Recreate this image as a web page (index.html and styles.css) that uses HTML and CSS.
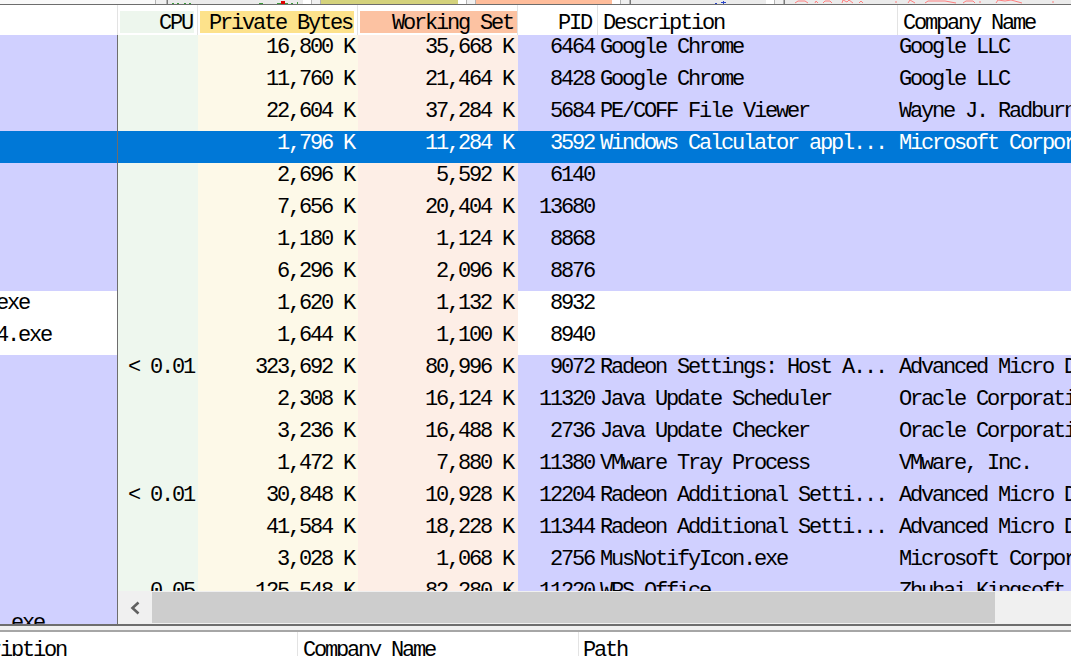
FILE: index.html
```html
<!DOCTYPE html>
<html>
<head>
<meta charset="utf-8">
<title>Process Explorer</title>
<link rel="stylesheet" href="styles.css">
</head>
<body>
<div class="app">
  <div class="graphs">
    <div class="g-blank"></div>
    <div class="g-btn g-btn-wide"></div>
    <div class="g-graph g-w136">
      <svg width="136" height="4" viewBox="0 0 136 4">
        <rect x="4" y="3" width="2" height="1" fill="#3d9a3d"/>
        <rect x="9" y="3" width="2" height="1" fill="#3d9a3d"/>
        <rect x="16" y="3" width="2" height="1" fill="#3d9a3d"/>
        <rect x="21" y="3" width="2" height="1" fill="#3d9a3d"/>
        <rect x="91" y="3" width="4" height="1" fill="#3d9a3d"/>
        <rect x="109" y="3" width="11" height="1" fill="#3d9a3d"/>
        <rect x="113" y="1" width="4" height="3" fill="#e00000"/>
        <rect x="123" y="3" width="2" height="1" fill="#3d9a3d"/>
        <rect x="129" y="2" width="1" height="2" fill="#3d9a3d"/>
      </svg>
    </div>
    <div class="g-gap"></div>
    <div class="g-btn"></div>
    <div class="g-fill g-olive"></div>
    <div class="g-gap"></div>
    <div class="g-btn"></div>
    <div class="g-fill g-salmon"></div>
    <div class="g-gap"></div>
    <div class="g-btn"></div>
    <div class="g-graph g-w136">
      <svg width="136" height="4" viewBox="0 0 136 4">
        <rect x="84" y="3" width="2" height="1" fill="#2a46c8"/>
        <rect x="92" y="1" width="1" height="3" fill="#2a46c8"/>
        <rect x="90" y="2" width="5" height="1" fill="#2a46c8"/>
      </svg>
    </div>
    <div class="g-gap"></div>
    <div class="g-btn"></div>
    <div class="g-graph g-rest">
      <svg width="288" height="4" viewBox="0 0 288 4">
        <path d="M10 3 L13 1 L20 1 L23 3 M30 3 L31 1 L33 3 M38 3 L40 1 L45 1 L47 3 M57 3 L58 0 L62 2 L64 0 L68 3 M74 3 L76 1 L78 3 M111 3 L111 1 M123 3 L125 0 L130 3 M140 3 L143 1 L160 1 L171 3 M178 3 L181 1 L188 1 L190 3 M195 3 L195 1 M211 3 L213 0 L220 1 L226 0 L237 3 M268 3 L268 1" stroke="#ff8080" stroke-width="1" fill="none"/>
      </svg>
    </div>
  </div>

  <div class="main">
    <div class="tree">
      <div class="tree-head"></div>
      <div class="tree-body">
        <div class="trow lav"></div>
        <div class="trow lav"></div>
        <div class="trow lav"></div>
        <div class="trow sel"></div>
        <div class="trow lav"></div>
        <div class="trow lav"></div>
        <div class="trow lav"></div>
        <div class="trow lav"></div>
        <div class="trow wht"><span class="tname">exe</span></div>
        <div class="trow wht"><span class="tname">4.exe</span></div>
        <div class="trow lav"></div>
        <div class="trow lav"></div>
        <div class="trow lav"></div>
        <div class="trow lav"></div>
        <div class="trow lav"></div>
        <div class="trow lav"></div>
        <div class="trow lav"></div>
        <div class="trow lav"></div>
        <div class="trow lav"><span class="tname tname-last">.exe</span></div>
      </div>
    </div>

    <div class="list">
      <div class="list-head">
        <div class="hc c-cpu"><span class="hbox hbox-cpu">CPU</span></div>
        <div class="hc c-pb"><span class="hbox hbox-pb">Private Bytes</span></div>
        <div class="hc c-ws"><span class="hbox hbox-ws">Working Set</span></div>
        <div class="hc c-pid"><span class="hlabel hlabel-right">PID</span></div>
        <div class="hc c-desc"><span class="hlabel">Description</span></div>
        <div class="hc c-co"><span class="hlabel">Company Name</span></div>
      </div>
      <div class="list-body">
        <div class="row lav"><div class="c c-cpu"></div><div class="c c-pb">16,800 K</div><div class="c c-ws">35,668 K</div><div class="c c-pid">6464</div><div class="c c-desc">Google Chrome</div><div class="c c-co">Google LLC</div></div>
        <div class="row lav"><div class="c c-cpu"></div><div class="c c-pb">11,760 K</div><div class="c c-ws">21,464 K</div><div class="c c-pid">8428</div><div class="c c-desc">Google Chrome</div><div class="c c-co">Google LLC</div></div>
        <div class="row lav"><div class="c c-cpu"></div><div class="c c-pb">22,604 K</div><div class="c c-ws">37,284 K</div><div class="c c-pid">5684</div><div class="c c-desc">PE/COFF File Viewer</div><div class="c c-co">Wayne J. Radburn</div></div>
        <div class="row sel"><div class="c c-cpu"></div><div class="c c-pb">1,796 K</div><div class="c c-ws">11,284 K</div><div class="c c-pid">3592</div><div class="c c-desc">Windows Calculator appl...</div><div class="c c-co">Microsoft Corporation</div></div>
        <div class="row lav"><div class="c c-cpu"></div><div class="c c-pb">2,696 K</div><div class="c c-ws">5,592 K</div><div class="c c-pid">6140</div><div class="c c-desc"></div><div class="c c-co"></div></div>
        <div class="row lav"><div class="c c-cpu"></div><div class="c c-pb">7,656 K</div><div class="c c-ws">20,404 K</div><div class="c c-pid">13680</div><div class="c c-desc"></div><div class="c c-co"></div></div>
        <div class="row lav"><div class="c c-cpu"></div><div class="c c-pb">1,180 K</div><div class="c c-ws">1,124 K</div><div class="c c-pid">8868</div><div class="c c-desc"></div><div class="c c-co"></div></div>
        <div class="row lav"><div class="c c-cpu"></div><div class="c c-pb">6,296 K</div><div class="c c-ws">2,096 K</div><div class="c c-pid">8876</div><div class="c c-desc"></div><div class="c c-co"></div></div>
        <div class="row wht"><div class="c c-cpu"></div><div class="c c-pb">1,620 K</div><div class="c c-ws">1,132 K</div><div class="c c-pid">8932</div><div class="c c-desc"></div><div class="c c-co"></div></div>
        <div class="row wht"><div class="c c-cpu"></div><div class="c c-pb">1,644 K</div><div class="c c-ws">1,100 K</div><div class="c c-pid">8940</div><div class="c c-desc"></div><div class="c c-co"></div></div>
        <div class="row lav"><div class="c c-cpu">&lt; 0.01</div><div class="c c-pb">323,692 K</div><div class="c c-ws">80,996 K</div><div class="c c-pid">9072</div><div class="c c-desc">Radeon Settings: Host A...</div><div class="c c-co">Advanced Micro Devices, Inc.</div></div>
        <div class="row lav"><div class="c c-cpu"></div><div class="c c-pb">2,308 K</div><div class="c c-ws">16,124 K</div><div class="c c-pid">11320</div><div class="c c-desc">Java Update Scheduler</div><div class="c c-co">Oracle Corporation</div></div>
        <div class="row lav"><div class="c c-cpu"></div><div class="c c-pb">3,236 K</div><div class="c c-ws">16,488 K</div><div class="c c-pid">2736</div><div class="c c-desc">Java Update Checker</div><div class="c c-co">Oracle Corporation</div></div>
        <div class="row lav"><div class="c c-cpu"></div><div class="c c-pb">1,472 K</div><div class="c c-ws">7,880 K</div><div class="c c-pid">11380</div><div class="c c-desc">VMware Tray Process</div><div class="c c-co">VMware, Inc.</div></div>
        <div class="row lav"><div class="c c-cpu">&lt; 0.01</div><div class="c c-pb">30,848 K</div><div class="c c-ws">10,928 K</div><div class="c c-pid">12204</div><div class="c c-desc">Radeon Additional Setti...</div><div class="c c-co">Advanced Micro Devices, Inc.</div></div>
        <div class="row lav"><div class="c c-cpu"></div><div class="c c-pb">41,584 K</div><div class="c c-ws">18,228 K</div><div class="c c-pid">11344</div><div class="c c-desc">Radeon Additional Setti...</div><div class="c c-co">Advanced Micro Devices, Inc.</div></div>
        <div class="row lav"><div class="c c-cpu"></div><div class="c c-pb">3,028 K</div><div class="c c-ws">1,068 K</div><div class="c c-pid">2756</div><div class="c c-desc">MusNotifyIcon.exe</div><div class="c c-co">Microsoft Corporation</div></div>
        <div class="row lav"><div class="c c-cpu">0.05</div><div class="c c-pb">125,548 K</div><div class="c c-ws">82,280 K</div><div class="c c-pid">11220</div><div class="c c-desc">WPS Office</div><div class="c c-co">Zhuhai Kingsoft Office Software Co.,Ltd</div></div>
      </div>
      <div class="hscroll">
        <div class="sb-btn">
          <svg width="10" height="14" viewBox="0 0 10 14"><polyline points="8.5,1.5 2.5,7 8.5,12.5" fill="none" stroke="#606060" stroke-width="2.6"/></svg>
        </div>
        <div class="sb-thumb"></div>
        <div class="sb-track"></div>
      </div>
    </div>
  </div>

  <div class="splitter"></div>

  <div class="lower-head">
    <div class="lh lh-desc"><span class="lh-shift">Description</span></div>
    <div class="lh lh-co">Company Name</div>
    <div class="lh lh-path">Path</div>
  </div>
</div>
</body>
</html>
```

FILE: styles.css
```css
* {
  box-sizing: border-box;
}

html,
body {
  margin: 0;
  padding: 0;
}

body {
  width: 1071px;
  height: 656px;
  overflow: hidden;
  background: #ffffff;
  color: #000000;
  font-family: "Liberation Mono", "DejaVu Sans Mono", monospace;
  font-size: 22px;
  letter-spacing: -2.2px;
}

.app {
  display: flex;
  flex-direction: column;
  height: 656px;
}

/* ---------- top graph strip ---------- */
.graphs {
  flex: none;
  display: flex;
  height: 5px;
  border-bottom: 1px solid #6d6d6d;
  background: #ffffff;
}

.graphs svg {
  display: block;
}

.g-blank {
  width: 155px;
  background: #f9f9f9;
}

.g-btn {
  width: 10px;
  background: #f0f0f0;
  border-left: 1px solid #b4b4b4;
  border-right: 1px solid #b4b4b4;
}

.g-btn-wide {
  width: 12px;
}

.g-gap {
  width: 8px;
  background: #ffffff;
}

.g-graph {
  background: #ebebeb;
  border-left: 1px solid #7a7a7a;
  overflow: hidden;
}

.g-w136 {
  width: 136px;
}

.g-rest {
  flex: 1;
}

.g-fill {
  width: 137px;
}

.g-olive {
  background: #d4d27c;
}

.g-salmon {
  width: 136px;
  background: #ffbd9b;
}

/* ---------- main split ---------- */
.main {
  flex: none;
  display: flex;
  height: 619px;
}

.tree {
  flex: none;
  width: 118px;
  display: flex;
  flex-direction: column;
}

.tree-head {
  flex: none;
  height: 30px;
  border-right: 1px solid #e3e3e3;
}

.tree-body {
  flex: 1;
  overflow: hidden;
  border-right: 1px solid #6d6d6d;
}

.trow {
  height: 32px;
  line-height: 26px;
  white-space: nowrap;
  overflow: hidden;
}

.tname {
  display: block;
  margin-left: -4px;
}

.tname-last {
  margin-left: 0;
}

.lav {
  background: #d0d0ff;
}

.wht {
  background: #ffffff;
}

.sel {
  background: #0078d7;
  color: #ffffff;
}

/* ---------- list ---------- */
.list {
  flex: 1;
  min-width: 0;
  display: flex;
  flex-direction: column;
  overflow: hidden;
}

.list-head {
  flex: none;
  display: flex;
  height: 30px;
  background: #ffffff;
}

.hc {
  flex: none;
  height: 30px;
  border-right: 1px solid #e3e3e3;
  padding-top: 6px;
  white-space: nowrap;
  overflow: hidden;
}

.hbox {
  display: block;
  height: 22px;
  line-height: 25px;
  text-align: right;
  margin-left: 2px;
}

.hbox-cpu {
  background: #edf6ed;
  margin-right: 3px;
  padding-right: 2px;
}

.hbox-pb {
  background: #fde28b;
  margin-right: 3px;
  padding-right: 2px;
}

.hbox-ws {
  background: #fcc2a2;
  margin-right: 0;
  padding-right: 4px;
}

.hlabel {
  display: block;
  line-height: 25px;
  padding-left: 5px;
}

.hlabel-right {
  text-align: right;
  padding-left: 0;
  padding-right: 6px;
}

.c-cpu {
  width: 80px;
}

.c-pb {
  width: 160px;
}

.c-ws {
  width: 160px;
}

.c-pid {
  width: 80px;
}

.c-desc {
  width: 300px;
}

.c-co {
  width: 320px;
}

.list-body {
  flex: 1;
  overflow: hidden;
}

.row {
  display: flex;
  height: 32px;
  line-height: 26px;
  white-space: nowrap;
}

.c {
  flex: none;
  height: 32px;
  overflow: hidden;
}

.row .c-cpu {
  background: #eef7ee;
  text-align: right;
  padding-right: 4px;
}

.row .c-pb {
  background: #fdf9e8;
  text-align: right;
  padding-right: 4px;
}

.row .c-ws {
  background: #fdeee6;
  text-align: right;
  padding-right: 5px;
}

.row .c-pid {
  text-align: right;
  padding-right: 4px;
}

.row .c-desc {
  padding-left: 2px;
}

.row .c-co {
  padding-left: 1px;
}

.row.sel .c {
  background: transparent;
}

/* ---------- horizontal scrollbar ---------- */
.hscroll {
  flex: none;
  display: flex;
  height: 33px;
  background: #f0f0f0;
}

.sb-btn {
  flex: none;
  width: 34px;
  display: flex;
  align-items: center;
  justify-content: center;
}

.sb-btn svg {
  display: block;
}

.sb-thumb {
  flex: none;
  width: 843px;
  margin: 1px 0;
  background: #cdcdcd;
}

.sb-track {
  flex: 1;
}

/* ---------- splitter + lower pane ---------- */
.splitter {
  flex: none;
  height: 8px;
  background: #f0f0f0;
  border-top: 2px solid #6d6d6d;
  border-bottom: 2px solid #a6a6a6;
}

.lower-head {
  flex: 1;
  display: flex;
  white-space: nowrap;
  overflow: hidden;
}

.lh {
  flex: none;
  line-height: 24px;
  padding-top: 7px;
  border-right: 1px solid #e3e3e3;
  overflow: hidden;
}

.lh-desc {
  width: 298px;
}

.lh-shift {
  display: inline-block;
  margin-left: -55px;
}

.lh-co {
  width: 281px;
  padding-left: 5px;
}

.lh-path {
  flex: 1;
  padding-left: 4px;
  border-right: none;
}
```
